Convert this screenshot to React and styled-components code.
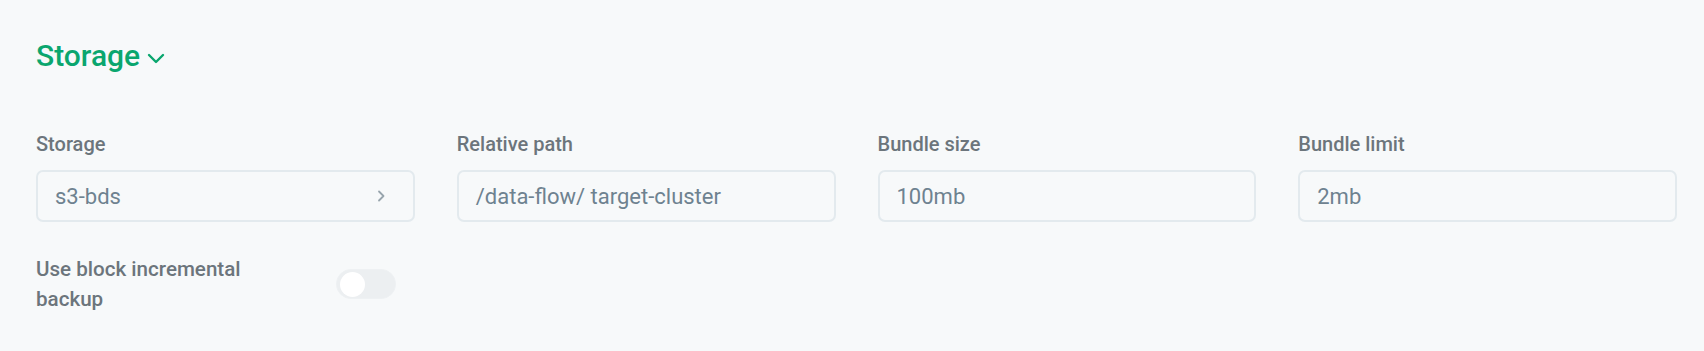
import React from "react";
import styled, { createGlobalStyle } from "styled-components";

const GlobalStyle = createGlobalStyle`
    html, body {
        margin: 0;
        padding: 0;
        background: #f7f9fa;
    }
    body {
        font-family: Roboto, "Noto Sans", "Liberation Sans", sans-serif;
    }
`;

const fields = [
    { label: "Storage", value: "s3-bds", select: true },
    { label: "Relative path", value: "/data-flow/ target-cluster" },
    { label: "Bundle size", value: "100mb" },
    { label: "Bundle limit", value: "2mb" },
];

const App = () => {
    return (
        <Page>
            <GlobalStyle />
            <SectionTitle>
                Storage
                <svg width="18" height="12" viewBox="0 0 18 12" fill="none">
                    <path d="M2 3l7 7 7-7" stroke="#0aa66e" strokeWidth="2.4" strokeLinecap="round" strokeLinejoin="round" />
                </svg>
            </SectionTitle>

            <FieldGrid>
                {fields.map((f) => (
                    <Field key={f.label}>
                        <Label>{f.label}</Label>
                        <InputBox>
                            <span>{f.value}</span>
                            {f.select && (
                                <svg width="9" height="12" viewBox="0 0 9 12" fill="none">
                                    <path d="M2 1.5l4.5 4.5L2 10.5" stroke="#98a5ad" strokeWidth="1.8" strokeLinecap="round" strokeLinejoin="round" />
                                </svg>
                            )}
                        </InputBox>
                    </Field>
                ))}
            </FieldGrid>

            <ToggleRow>
                <ToggleLabel>Use block incremental backup</ToggleLabel>
                <Switch>
                    <Knob />
                </Switch>
            </ToggleRow>
        </Page>
    );
};

export default App;

const Page = styled.div`
    width: 1704px;
    height: 351px;
    box-sizing: border-box;
    padding: 38px 27px 0 36px;
`;

const SectionTitle = styled.div`
    display: flex;
    align-items: center;
    gap: 7px;
    color: #0aa66e;
    font-size: 30px;
    font-weight: 500;
    line-height: 36px;
    svg {
        margin-top: 3px;
    }
`;

const FieldGrid = styled.div`
    display: grid;
    grid-template-columns: repeat(4, 1fr);
    column-gap: 42px;
    margin-top: 57px;
`;

const Field = styled.div`
    display: flex;
    flex-direction: column;
`;

const Label = styled.div`
    color: #6c757c;
    font-size: 20px;
    font-weight: 500;
    line-height: 26px;
    margin-bottom: 13px;
`;

const InputBox = styled.div`
    display: flex;
    align-items: center;
    justify-content: space-between;
    height: 52px;
    box-sizing: border-box;
    padding: 0 27px 0 17px;
    border: 2px solid #e3eaee;
    border-radius: 7px;
    background: #f7f9fa;
    color: #6e8290;
    font-size: 22px;
    font-weight: 400;
`;

const ToggleRow = styled.div`
    display: flex;
    align-items: center;
    margin-top: 32px;
`;

const ToggleLabel = styled.div`
    width: 250px;
    margin-right: 50px;
    color: #6c757c;
    font-size: 20.6px;
    font-weight: 500;
    line-height: 30px;
`;

const Switch = styled.div`
    display: flex;
    align-items: center;
    width: 60px;
    height: 30px;
    box-sizing: border-box;
    padding: 0 3px;
    border-radius: 15px;
    background: #eceff1;
    border: 1px solid #eef1f3;
`;

const Knob = styled.div`
    width: 25px;
    height: 25px;
    border-radius: 50%;
    background: #ffffff;
`;
